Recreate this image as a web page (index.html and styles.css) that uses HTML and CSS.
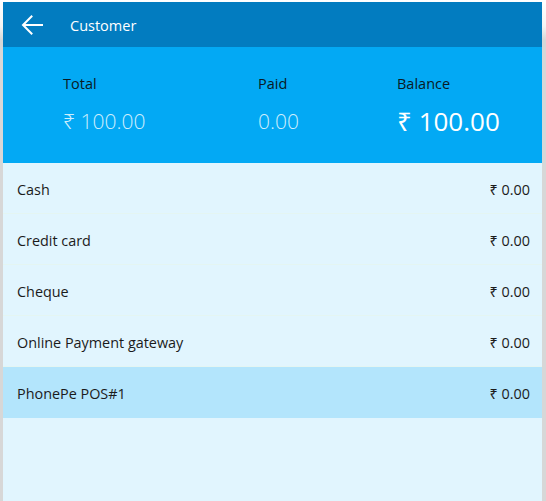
FILE: index.html
```html
<!DOCTYPE html>
<html>
<head>
<meta charset="utf-8">
<link rel="stylesheet" href="styles.css">
</head>
<body>
<div class="app">
  <header class="topbar">
    <svg class="back" width="22" height="20" viewBox="0 0 22 20">
      <path d="M21 10H2.5M10.5 1.5L2 10l8.5 8.5" fill="none" stroke="#fff" stroke-width="2" stroke-linecap="square"/>
    </svg>
    <span class="title">Customer</span>
  </header>
  <section class="summary">
    <div class="col">
      <div class="label">Total</div>
      <div class="value light">₹ 100.00</div>
    </div>
    <div class="col">
      <div class="label">Paid</div>
      <div class="value light">0.00</div>
    </div>
    <div class="col">
      <div class="label">Balance</div>
      <div class="value big">₹ 100.00</div>
    </div>
  </section>
  <ul class="list">
    <li class="row"><span>Cash</span><span>₹ 0.00</span></li>
    <li class="row"><span>Credit card</span><span>₹ 0.00</span></li>
    <li class="row"><span>Cheque</span><span>₹ 0.00</span></li>
    <li class="row"><span>Online Payment gateway</span><span>₹ 0.00</span></li>
    <li class="row selected"><span>PhonePe POS#1</span><span>₹ 0.00</span></li>
  </ul>
</div>
</body>
</html>
```
FILE: styles.css
```css
html, body {
  margin: 0;
  padding: 0;
  height: 100%;
}
body {
  background: linear-gradient(#ffffff 0, #f4f4f4 26px, #d7d7d7 40px, #d7d7d7 100%);
  font-family: "Open Sans", "Noto Sans", sans-serif;
  overflow: hidden;
}
.app {
  margin: 2px 4px 0 3px;
  height: 499px;
  background: #e1f5fe;
  display: flex;
  flex-direction: column;
}
.topbar {
  height: 45px;
  background: #027cc0;
  display: flex;
  align-items: center;
  color: #fff;
}
.back {
  margin-left: 18px;
}
.title {
  margin-left: 27px;
  font-size: 14.5px;
  padding-top: 1px;
}
.summary {
  height: 116px;
  background: #03a9f4;
  display: grid;
  grid-template-columns: 195px 139px auto;
  padding-left: 60px;
  box-sizing: border-box;
  padding-top: 26px;
}
.label {
  font-size: 14.5px;
  color: #0a1a24;
  height: 22px;
  line-height: 22px;
}
.value {
  margin-top: 10px;
  height: 32px;
  line-height: 32px;
}
.value.light {
  font-size: 21px;
  font-weight: 300;
  color: #cdeefd;
}
.value.big {
  font-size: 26px;
  font-weight: 400;
  color: #fff;
}
.list {
  list-style: none;
  margin: 0;
  padding: 0;
}
.row {
  border-bottom: 1px solid #e4f5f2;
  display: flex;
  align-items: center;
  justify-content: space-between;
  padding: 3px 12px 0 14px;
  box-sizing: content-box;
  height: 47px;
  font-size: 14.4px;
  color: #1b1b1b;
}
.row.selected {
  background: #b3e5fc;
  border-bottom-color: #b3e5fc;
}
```
